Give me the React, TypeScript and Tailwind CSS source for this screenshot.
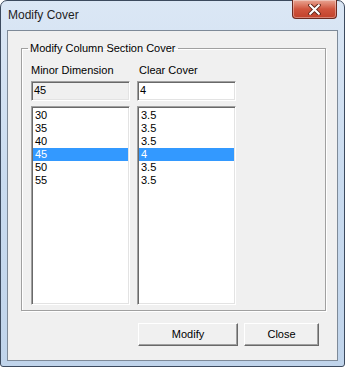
const minor = ['30', '35', '40', '45', '50', '55']
const cover = ['3.5', '3.5', '3.5', '4', '3.5', '3.5']

const sunken =
  'border-t-[#a0a0a0] border-l-[#a0a0a0] border-b-white border-r-white shadow-[inset_1px_1px_0_#696969,inset_-1px_-1px_0_#e3e3e3]'

function ListBox({ items, selected }: { items: string[]; selected: number }) {
  return (
    <div className={`w-[99px] h-[199px] bg-white border p-[1px] ${sunken}`}>
      <div className="flex flex-col pt-[1px]">
        {items.map((it, i) => (
          <div
            key={i}
            className={`h-[13px] leading-[13px] pl-[2px] ${i === selected ? 'bg-[#3399ff] text-white' : 'text-black'}`}
          >
            {it}
          </div>
        ))}
      </div>
    </div>
  )
}

function Button({ label, w }: { label: string; w: string }) {
  return (
    <button
      className={`${w} h-[23px] bg-[#f0f0f0] border border-t-white border-l-white border-b-[#696969] border-r-[#696969] shadow-[inset_-1px_-1px_0_#a0a0a0] text-black text-[11px] leading-[13px]`}
    >
      {label}
    </button>
  )
}

export default function App() {
  return (
    <div className="w-[345px] h-[367px] flex flex-col rounded-t-[7px] rounded-b-[3px] border border-[#3c4a5e] bg-gradient-to-b from-[#dbe7f5] via-[#c9dbef] to-[#c0d4eb] px-[6px] pb-[5px] font-['Liberation_Sans',Arial,sans-serif] text-[11px] text-black">
      {/* Title bar */}
      <div className="h-[29px] flex items-start justify-between shrink-0">
        <div className="pt-[7px] pl-[1px] text-[12px] leading-[15px] text-[#1e1e1e]">Modify Cover</div>
        <div className="w-[45px] h-[19px] -mt-px mr-px rounded-b-[4px] border border-t-0 border-[#6b2a20] bg-gradient-to-b from-[#e8a593] via-[#d0553e] to-[#c1412a] shadow-[inset_0_0_0_1px_rgba(255,255,255,0.35)] flex items-center justify-center">
          <svg viewBox="0 0 12 10" className="w-[13px] h-[11px]">
            <path d="M2 1 L10 9 M10 1 L2 9" stroke="#5a2216" strokeWidth={3.6} strokeLinecap="round" />
            <path d="M2 1 L10 9 M10 1 L2 9" stroke="#ffffff" strokeWidth={2} strokeLinecap="round" />
          </svg>
        </div>
      </div>

      {/* Client area */}
      <div className="flex-1 bg-[#f0f0f0] border border-[#7e8a98] flex flex-col">
        <fieldset className="ml-[13px] mt-[11px] w-[305px] border border-[#a0a0a0] shadow-[1px_1px_0_#ffffff,inset_1px_1px_0_#ffffff] px-[9px] pb-[5px] pt-[9px]">
          <legend className="-ml-[3px] px-[2px] leading-[13px]">Modify Column Section Cover</legend>
          <div className="flex gap-[7px]">
            <div className="flex flex-col">
              <div className="leading-[13px] h-[13px]">Minor Dimension</div>
              <div className={`mt-[4px] w-[99px] h-[20px] bg-[#f0f0f0] border pl-[2px] leading-[16px] ${sunken}`}>45</div>
              <div className="mt-[5px]">
                <ListBox items={minor} selected={3} />
              </div>
            </div>
            <div className="flex flex-col">
              <div className="leading-[13px] h-[13px] ml-[2px]">Clear Cover</div>
              <div className={`mt-[4px] w-[99px] h-[20px] bg-white border pl-[2px] leading-[16px] ${sunken}`}>4</div>
              <div className="mt-[5px]">
                <ListBox items={cover} selected={3} />
              </div>
            </div>
          </div>
        </fieldset>

        <div className="flex justify-end gap-[6px] mt-[12px] pr-[18px]">
          <Button label="Modify" w="w-[100px]" />
          <Button label="Close" w="w-[75px]" />
        </div>
      </div>
    </div>
  )
}
